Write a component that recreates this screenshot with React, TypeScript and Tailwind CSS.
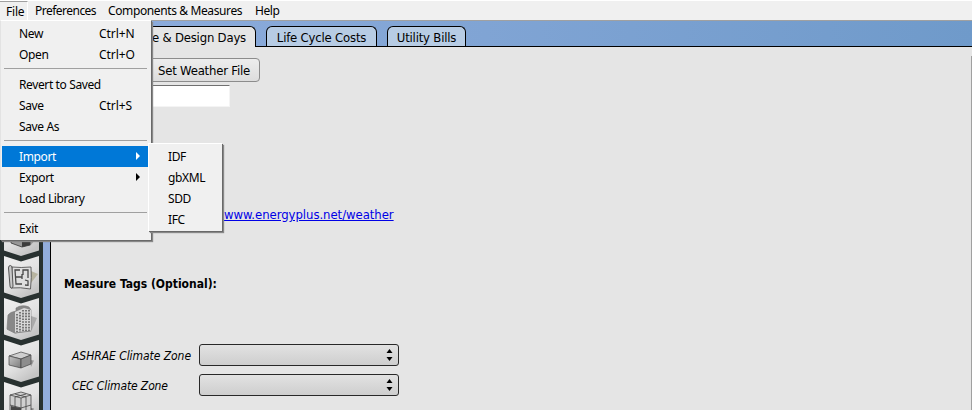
import type { ReactNode } from "react";

const MENU_FONT = "font-['Noto_Sans','Open_Sans',sans-serif]";
const BODY_FONT = "font-['DejaVu_Sans_Condensed','DejaVu_Sans',sans-serif]";

function Separator() {
  return <div className="mx-[2px] h-[9px] pt-[3px]"><div className="h-px bg-[#a0a0a0]" /></div>;
}

function MenuItem({ label, shortcut, active, arrow }: { label: string; shortcut?: string; active?: boolean; arrow?: boolean }) {
  return (
    <div className={`flex h-[21px] items-center pl-[17px] ${active ? "bg-[#0078d7] text-white" : ""}`}>
      <span className="w-[80px] whitespace-nowrap tracking-[-0.38px]">{label}</span>
      {shortcut && <span className="whitespace-nowrap tracking-[-0.05px]">{shortcut}</span>}
      {arrow && (
        <svg className="ml-[36px]" width="6" height="9" viewBox="0 0 6 9"><path d="M1 0v8l4-4z" fill="currentColor" /></svg>
      )}
    </div>
  );
}

function SideStep({ children }: { children?: ReactNode }) {
  return (
    <svg className="block shrink-0 overflow-visible" width="43" height="42" viewBox="0 0 43 42">
      <defs>
        <linearGradient id="step" x1="0" y1="0" x2=".6" y2="1">
          <stop offset="0" stopColor="#f0f0f0" />
          <stop offset=".6" stopColor="#e2e2e2" />
          <stop offset="1" stopColor="#c4c4c4" />
        </linearGradient>
        <linearGradient id="face" x1="0" y1="0" x2="1" y2="1">
          <stop offset="0" stopColor="#c4c4c4" />
          <stop offset="1" stopColor="#7c7c7c" />
        </linearGradient>
      </defs>
      <path d="M4 0 21 5.5 39 0V36.5L21 42 4 36.5z" fill="url(#step)" />
      {children}
    </svg>
  );
}

function Sidebar() {
  return (
    <div className="flex h-full w-[43px] shrink-0 flex-col overflow-hidden bg-[#283130] pt-[193px]">
      <SideStep>
        <path d="m30 22 6 3-6 7z" fill="#999" />
        <path d="M12 17 23 14 30 18V31L22 33 11 29z" fill="#999" stroke="#333" strokeWidth=".8" />
        <path d="m22 20 8-2v13l-8 2z" fill="#3c3c3c" />
      </SideStep>
      <SideStep>
        <path d="m31 15 7 3-7 9z" fill="#b7b4a0" />
        <path d="M12 11q9 1 19 0 .8 10-.5 22Q20 31 11 32z" fill="#dedede" stroke="#555" strokeWidth=".9" />
        <path d="M8.500 12q0-2.500 1.800-2.500T12 12l1 18q0 2-1.500 2T10 30z" fill="#c8c8c8" stroke="#444" strokeWidth=".9" />
        <path d="M20 14h-5l1 14h6m3 1 3 .3V25l-3-1m3-2V14h-5v5m-8 2h7v-3m0 3v2" fill="none" stroke="#484848" strokeWidth="1.300" />
      </SideStep>
      <SideStep>
        <path d="m31 18 6 2-6 14z" fill="#aaa" />
        <path d="M8 17q2-3 8-4V10q6-4 13-1l2 3V32L15 35 7 31z" fill="#888" stroke="#777" strokeWidth=".6" />
        <path d="m15 14 9-4 7 2v21l-16 2z" fill="#d8d8d8" />
        <path d="M17 16v18m3-20v20m3-22v22m3-22v21m3-21v21" stroke="#555" strokeWidth="1.500" strokeDasharray="1.600 1.200" />
        <path d="M7 31 15 35l16-2" fill="none" stroke="#888" />
      </SideStep>
      <SideStep>
        <path d="m30 20 4 .5-3 6.500z" fill="#999" />
        <path d="m9 16 12-4 10 3-10 4z" fill="#cfcfcf" stroke="#444" strokeWidth=".7" />
        <path d="m9 16 12 3v9L9 25z" fill="url(#face)" stroke="#444" strokeWidth=".7" />
        <path d="m21 19 10-4v9l-10 4z" fill="#8d8d8d" stroke="#444" strokeWidth=".7" />
      </SideStep>
      <SideStep>
        <path d="m31 26 3 .5-3 6.500z" fill="#888" />
        <path d="m10 13 11-3 10 3v19l-10 4-11-4z" fill="#d0d0d0" stroke="#444" strokeWidth=".8" />
        <path d="m11 24 10 2v10l-10-4z" fill="#484848" />
        <path d="m10 13 11 3 10-3M15 12l11 3v19M26 12l-11 3v10M21 16v20M10 23l11 3 10-3" fill="none" stroke="#444" strokeWidth=".8" />
      </SideStep>
    </div>
  );
}

function Tab({ label, className }: { label: string; className: string }) {
  return (
    <div className={`flex h-[20px] items-center justify-center whitespace-nowrap rounded-t-[6px] border border-b-0 border-black bg-[#b7cce4] pt-[2px] ${className}`}>{label}</div>
  );
}

function ClimateSelect({ label, tracking }: { label: string; tracking: string }) {
  return (
    <div className="flex h-[22px] items-center">
      <span className={`w-[128px] whitespace-nowrap pl-px pt-[2px] italic ${tracking}`}>{label}</span>
      <div className="flex h-[22px] w-[200px] items-center justify-end rounded-[3px] border border-[#282828] bg-linear-to-b from-[#e2e2e2] to-[#cecece] pr-[5px]">
        <svg width="7" height="14" viewBox="0 0 7 14"><path d="M3.5 1 6.5 5h-6zM.5 9h6l-3 4z" fill="#000" /></svg>
      </div>
    </div>
  );
}

export default function App() {
  return (
    <div className={`relative flex h-[410px] w-[972px] flex-col overflow-hidden bg-[#e5e5e5] text-[12px] leading-[16px] text-black ${BODY_FONT}`}>
      <header className={`flex h-[21px] shrink-0 items-center border-b border-b-[#a0a0a0] border-t border-t-white bg-[#f0f0f0] ${MENU_FONT}`}>
        <span className="flex h-[19px] w-[28px] items-center border-r border-t border-r-white border-t-[#a0a0a0] pl-[6px] pt-[2px] tracking-[-0.2px]">File</span>
        <span className="ml-[7px] w-[73px] whitespace-nowrap tracking-[-0.52px]">Preferences</span>
        <span className="w-[147px] whitespace-nowrap tracking-[-0.38px]">Components &amp; Measures</span>
        <span className="tracking-[-0.4px]">Help</span>
      </header>
      <div className="flex min-h-0 flex-1">
        <Sidebar />
        <div className="w-[7px] shrink-0 bg-[#92addb]" />
        <main className="flex min-w-0 flex-1 flex-col">
          <div className="flex h-[26px] shrink-0 items-end border-b border-black bg-linear-to-r from-[#8faddd] to-[#6f9aca] text-[13px] tracking-[-0.2px]">
            <div className="-mb-px flex h-[21px] w-[206px] items-center justify-end whitespace-nowrap rounded-tr-[6px] border-r border-t border-black bg-[#e5e5e5] pr-[9px] pt-[2px]">e &amp; Design Days</div>
            <Tab label="Life Cycle Costs" className="ml-[10px] w-[111px]" />
            <Tab label="Utility Bills" className="ml-[10px] w-[79px]" />
          </div>
          <div className="flex min-h-0 flex-1 border-l border-black">
            <div className="flex flex-1 flex-col items-start pl-[13px] pt-[11px]">
              <div className="ml-[60px] flex h-[24px] w-[136px] items-center justify-end whitespace-nowrap rounded-[4px] border border-[#8c8c8c] bg-linear-to-b from-[#ededed] to-[#dddddd] pr-[9px] pt-[2px] text-[13px] tracking-[-0.2px]">Set Weather File</div>
              <div className="mt-[3px] h-[22px] w-[166px] border-r border-t border-b border-r-[#f4f4f4] border-b-[#f4f4f4] border-t-[#707070] bg-white" />
              <a className="ml-[160px] mt-[100px] h-[16px] whitespace-nowrap text-[13px] tracking-[-0.05px] text-[#0000e6] underline">www.energyplus.net/weather</a>
              <div className="mt-[53px] h-[16px] whitespace-nowrap font-bold">Measure Tags (Optional):</div>
              <div className="ml-[7px] mt-[52px] flex flex-col gap-[8px]">
                <ClimateSelect label="ASHRAE Climate Zone" tracking="tracking-[-0.05px]" />
                <ClimateSelect label="CEC Climate Zone" tracking="tracking-[-0.12px]" />
              </div>
            </div>
            <div className="mt-[9px] w-px bg-[#a0a0a0]" />
          </div>
        </main>
      </div>

      <div className={`absolute left-0 top-[20px] flex h-[220px] w-[151px] flex-col border-l border-t border-l-[#e3e3e3] border-t-white bg-[#f0f0f0] px-px pt-[2px] shadow-[1px_1px_0_#696969,2px_2px_1px_#888] ${MENU_FONT}`}>
        <div className="mr-px flex flex-col">
          <MenuItem label="New" shortcut="Ctrl+N" />
          <MenuItem label="Open" shortcut="Ctrl+O" />
          <Separator />
          <MenuItem label="Revert to Saved" />
          <MenuItem label="Save" shortcut="Ctrl+S" />
          <MenuItem label="Save As" />
          <Separator />
          <MenuItem label="Import" active arrow />
          <MenuItem label="Export" arrow />
          <MenuItem label="Load Library" />
          <Separator />
          <MenuItem label="Exit" />
        </div>
      </div>
      <div className={`absolute left-[148px] top-[143px] flex h-[88px] w-[74px] flex-col border-l border-t border-white bg-[#f0f0f0] pl-[2px] pt-[2px] shadow-[1px_1px_0_#696969,2px_2px_1px_#888] ${MENU_FONT}`}>
        <MenuItem label="IDF" />
        <MenuItem label="gbXML" />
        <MenuItem label="SDD" />
        <MenuItem label="IFC" />
      </div>
    </div>
  );
}
